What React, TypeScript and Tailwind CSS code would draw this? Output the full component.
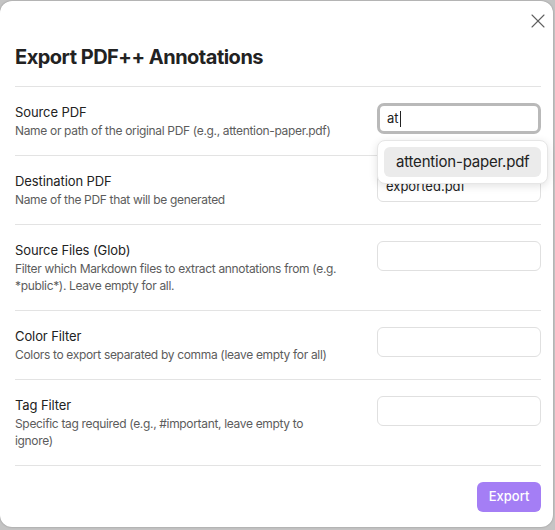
import { X } from 'lucide-react';

interface SettingRowProps {
  label: string;
  desc: string;
  value?: string;
  focused?: boolean;
  children?: React.ReactNode;
}

function SettingRow({ label, desc, value, focused, children }: SettingRowProps) {
  return (
    <div className="flex items-start justify-between border-t border-[#e3e3e3] py-4">
      <div className="w-[325px]">
        <div className="text-[13px] leading-[18px] tracking-[-0.1px] text-[#222222]">{label}</div>
        <div className="mt-px text-[12px] leading-[17px] tracking-[-0.33px] text-[#5c5c5c]">{desc}</div>
      </div>
      <div className="relative">
        <div
          className={
            focused
              ? 'flex h-[31px] w-[164px] items-center rounded-[7px] border-[3px] border-[#b9b9b9] bg-white px-[7px] text-[13px] text-[#222222]'
              : 'flex h-[30px] w-[164px] items-center rounded-[6px] border border-[#e0e0e0] bg-white px-[8px] text-[13px] text-[#222222]'
          }
        >
          {value}
          {focused && <span className="ml-px h-[16px] w-px bg-[#222222]" />}
        </div>
        {children}
      </div>
    </div>
  );
}

export default function App() {
  return (
    <div
      className="h-[530px] w-[555px] bg-[#c4c4c4] pt-px"
      style={{ fontFamily: 'Inter, "Noto Sans", sans-serif' }}
    >
      <div className="relative h-[526px] w-[553px] rounded-[12px] bg-white pl-[15px] pr-[12px] shadow-[0_0_2px_rgba(0,0,0,0.3)]">
        <button className="absolute right-[3px] top-[8px] text-[#5f5f5f]">
          <X className="h-[24px] w-[24px]" strokeWidth={1.1} />
        </button>

        <h1 className="pt-[42px] pb-[15px] text-[20px] font-bold leading-[28px] tracking-[-0.5px] text-[#222222]">
          Export PDF++ Annotations
        </h1>

        <SettingRow
          label="Source PDF"
          desc="Name or path of the original PDF (e.g., attention-paper.pdf)"
          value="at"
          focused
        >
          <div className="absolute left-0 top-[37px] z-10 w-[171px] rounded-[8px] border border-[#e6e6e6] bg-white p-[6px] shadow-[0_2px_8px_rgba(0,0,0,0.12)]">
            <div className="flex h-[30px] items-center whitespace-nowrap rounded-[6px] bg-[#ebebeb] px-[12px] text-[15px] tracking-[-0.2px] text-[#222222]">
              attention-paper.pdf
            </div>
          </div>
        </SettingRow>
        <SettingRow
          label="Destination PDF"
          desc="Name of the PDF that will be generated"
          value="exported.pdf"
        />
        <SettingRow
          label="Source Files (Glob)"
          desc="Filter which Markdown files to extract annotations from (e.g. *public*). Leave empty for all."
        />
        <SettingRow
          label="Color Filter"
          desc="Colors to export separated by comma (leave empty for all)"
        />
        <SettingRow
          label="Tag Filter"
          desc="Specific tag required (e.g., #important, leave empty to ignore)"
        />

        <div className="flex justify-end border-t border-[#e3e3e3] pt-4">
          <button className="h-[30px] w-[64px] rounded-[6px] bg-[#a47ef5] text-[13px] font-medium text-white">
            Export
          </button>
        </div>
      </div>
    </div>
  );
}
